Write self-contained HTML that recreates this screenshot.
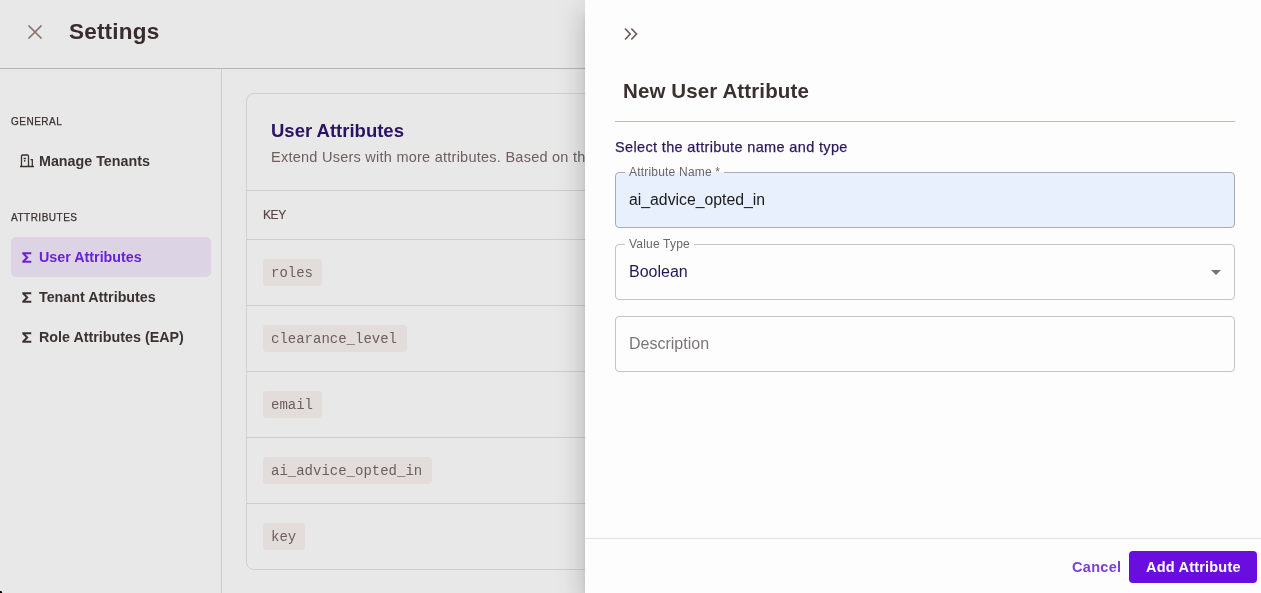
<!DOCTYPE html>
<html><head><meta charset="utf-8">
<style>
*{box-sizing:border-box;margin:0;padding:0}
html,body{width:1261px;height:593px;overflow:hidden;background:#e9e8e8;font-family:"Liberation Sans",sans-serif;-webkit-font-smoothing:antialiased}
.abs{position:absolute}
.t{position:absolute;white-space:nowrap;will-change:transform}
.sec{font-size:10px;letter-spacing:0.5px;color:#3a3131;-webkit-text-stroke:0.25px #3a3131}
.nav{font-size:14.3px;font-weight:bold;color:#3c3232}
.hline{position:absolute;height:1px;background:#cfcccc}
.chip{position:absolute;left:263px;height:27px;background:#e2dcda;border-radius:4px}
.code{position:absolute;left:271px;font-family:"Liberation Mono",monospace;font-size:14px;color:#6d5e5c;white-space:nowrap;will-change:transform}
.field{position:absolute;left:615px;width:620px;height:56px;border:1px solid #c4c2c2;border-radius:4px}
.flabel{position:absolute;font-size:12px;letter-spacing:0.2px;color:#6a6666;background:#fefdfd;padding:0 4px;white-space:nowrap;will-change:transform}
</style></head><body>
<!-- header -->
<div class="abs" style="left:0;top:68px;width:1261px;height:1px;background:#bfb1ae"></div>
<svg class="abs" style="left:27px;top:24px" width="16" height="16" viewBox="0 0 16 16"><path d="M1.5 1.5L14.5 14.5M14.5 1.5L1.5 14.5" stroke="#8a706c" stroke-width="1.7" fill="none"/></svg>
<div class="t" style="left:69px;top:19px;font-size:22.5px;letter-spacing:0.2px;font-weight:bold;color:#3a2c2c">Settings</div>

<!-- sidebar -->
<div class="abs" style="left:221px;top:69px;width:1px;height:524px;background:#cfcccb"></div>
<div class="t sec" style="left:11px;top:116px">GENERAL</div>
<svg class="abs" style="left:19px;top:153px" width="16" height="16" viewBox="0 0 16 16"><path d="M1 13.5H15M2.5 13.5V3.2Q2.5 2 3.7 2H8.3Q9.5 2 9.5 3.2V13.5M11.6 6.6H13.3V13.5M4.6 5.5H6.8" stroke="#3a3030" stroke-width="1.3" fill="none"/><circle cx="5.7" cy="7.8" r="0.9" fill="#3a3030"/></svg>
<div class="t nav" style="left:39px;top:153px">Manage Tenants</div>
<div class="t sec" style="left:11px;top:212px">ATTRIBUTES</div>
<div class="abs" style="left:11px;top:237px;width:200px;height:40px;background:#dcd3e5;border-radius:5px"></div>
<svg class="abs" style="left:22px;top:252px" width="10" height="11" viewBox="0 0 10 11"><path d="M0.3 0.3H9.3V2.2H3.5L6.6 5.5L3.5 8.8H9.3V10.7H0.3V8.9L3.8 5.5L0.3 2.1Z" fill="#6b22d0"/></svg>
<div class="t nav" style="left:39px;top:249px;color:#6b22d0">User Attributes</div>
<svg class="abs" style="left:22px;top:292px" width="10" height="11" viewBox="0 0 10 11"><path d="M0.3 0.3H9.3V2.2H3.5L6.6 5.5L3.5 8.8H9.3V10.7H0.3V8.9L3.8 5.5L0.3 2.1Z" fill="#3c3232"/></svg>
<div class="t nav" style="left:39px;top:289px">Tenant Attributes</div>
<svg class="abs" style="left:22px;top:332px" width="10" height="11" viewBox="0 0 10 11"><path d="M0.3 0.3H9.3V2.2H3.5L6.6 5.5L3.5 8.8H9.3V10.7H0.3V8.9L3.8 5.5L0.3 2.1Z" fill="#3c3232"/></svg>
<div class="t nav" style="left:39px;top:329px">Role Attributes (EAP)</div>

<svg class="abs" style="left:0;top:583px" width="10" height="10" viewBox="0 0 10 10"><circle cx="0" cy="10" r="3.4" fill="#ffffff" opacity="0.5"/><circle cx="0" cy="10" r="2.3" fill="#000"/></svg>
<!-- card -->
<div class="abs" style="left:246px;top:93px;width:400px;height:477px;border:1px solid #d3cfcf;border-radius:8px"></div>
<div class="t" style="left:271px;top:120px;font-size:18.5px;font-weight:bold;color:#2a1363">User Attributes</div>
<div class="t" style="left:271px;top:149px;font-size:14.5px;letter-spacing:0.25px;color:#6e5e5e">Extend Users with more attributes. Based on the</div>
<div class="hline" style="left:247px;top:190px;width:340px"></div>
<div class="t" style="left:263px;top:208px;font-size:12px;letter-spacing:-0.4px;color:#5a4444;-webkit-text-stroke:0.2px #5a4444">KEY</div>
<div class="hline" style="left:247px;top:239px;width:340px"></div>
<div class="chip" style="top:259px;width:59px"></div><div class="code" style="top:265px">roles</div>
<div class="hline" style="left:247px;top:305px;width:340px"></div>
<div class="chip" style="top:325px;width:144px"></div><div class="code" style="top:331px">clearance_level</div>
<div class="hline" style="left:247px;top:371px;width:340px"></div>
<div class="chip" style="top:391px;width:59px"></div><div class="code" style="top:397px">email</div>
<div class="hline" style="left:247px;top:437px;width:340px"></div>
<div class="chip" style="top:457px;width:169px"></div><div class="code" style="top:463px">ai_advice_opted_in</div>
<div class="hline" style="left:247px;top:503px;width:340px"></div>
<div class="chip" style="top:523px;width:42px"></div><div class="code" style="top:529px">key</div>

<!-- drawer -->
<div class="abs" style="left:585px;top:0;width:676px;height:593px;background:#fefdfd;box-shadow:0px 8px 10px -5px rgba(0,0,0,0.17),0px 16px 24px 2px rgba(0,0,0,0.11),0px 6px 30px 5px rgba(0,0,0,0.09)"></div>
<svg class="abs" style="left:623px;top:27px" width="16" height="14" viewBox="0 0 16 14"><path d="M2 1.5L7.2 7L2 12.5M8.3 1.5L13.5 7L8.3 12.5" stroke="#6e5a5a" stroke-width="1.7" fill="none"/></svg>
<div class="t" style="left:623px;top:79px;font-size:20.5px;letter-spacing:0.12px;font-weight:bold;color:#3a302e">New User Attribute</div>
<div class="abs" style="left:615px;top:121px;width:620px;height:1px;background:#c6b9b7"></div>
<div class="t" style="left:615px;top:139px;font-size:14.5px;letter-spacing:0.35px;color:#2c1a5c;-webkit-text-stroke:0.25px #2c1a5c">Select the attribute name and type</div>

<div class="field" style="top:172px;background:#e8f0fe;border-color:#a9abb0"></div>
<div class="flabel" style="left:625px;top:165px;background:linear-gradient(#fefdfd 50%,#e8f0fe 50%)">Attribute Name *</div>
<div class="t" style="left:629px;top:191px;font-size:15.8px;color:#1c1a1a">ai_advice_opted_in</div>

<div class="field" style="top:244px"></div>
<div class="flabel" style="left:625px;top:237px">Value Type</div>
<div class="t" style="left:629px;top:263px;font-size:16px;color:#24165a">Boolean</div>
<svg class="abs" style="left:1211px;top:270px" width="10" height="5" viewBox="0 0 10 5"><path d="M0 0H10L5 5Z" fill="#757575"/></svg>

<div class="field" style="top:316px"></div>
<div class="t" style="left:629px;top:335px;font-size:16px;color:#7a7676">Description</div>

<div class="abs" style="left:585px;top:538px;width:676px;height:1px;background:#e4e2e2"></div>
<div class="t" style="left:1072px;top:559px;font-size:14.5px;font-weight:bold;letter-spacing:0.3px;color:#7a3fd6">Cancel</div>
<div class="abs" style="left:1129px;top:551px;width:128px;height:32px;background:#6a0ee0;border-radius:4px"></div>
<div class="t" style="left:1146px;top:559px;font-size:14.5px;font-weight:bold;letter-spacing:0.2px;color:#fff">Add Attribute</div>
</body></html>
